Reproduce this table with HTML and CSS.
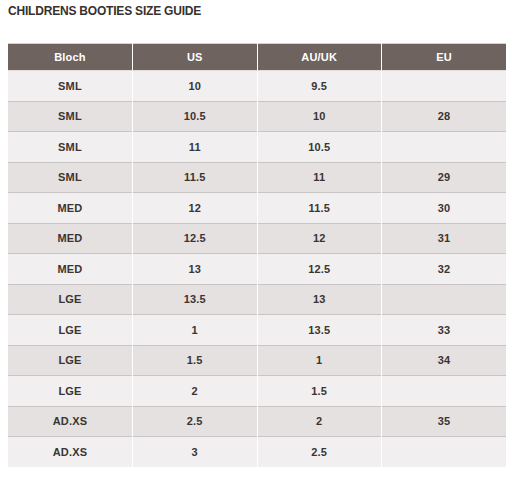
FILE: index.html
```html
<!DOCTYPE html>
<html>
<head>
<meta charset="utf-8">
<link rel="stylesheet" href="styles.css">
</head>
<body>
<h2 class="title">CHILDRENS BOOTIES SIZE GUIDE</h2>
<table class="size-table">
<thead>
<tr><th>Bloch</th><th>US</th><th>AU/UK</th><th>EU</th></tr>
</thead>
<tbody>
<tr><td>SML</td><td>10</td><td>9.5</td><td></td></tr>
<tr><td>SML</td><td>10.5</td><td>10</td><td>28</td></tr>
<tr><td>SML</td><td>11</td><td>10.5</td><td></td></tr>
<tr><td>SML</td><td>11.5</td><td>11</td><td>29</td></tr>
<tr><td>MED</td><td>12</td><td>11.5</td><td>30</td></tr>
<tr><td>MED</td><td>12.5</td><td>12</td><td>31</td></tr>
<tr><td>MED</td><td>13</td><td>12.5</td><td>32</td></tr>
<tr><td>LGE</td><td>13.5</td><td>13</td><td></td></tr>
<tr><td>LGE</td><td>1</td><td>13.5</td><td>33</td></tr>
<tr><td>LGE</td><td>1.5</td><td>1</td><td>34</td></tr>
<tr><td>LGE</td><td>2</td><td>1.5</td><td></td></tr>
<tr><td>AD.XS</td><td>2.5</td><td>2</td><td>35</td></tr>
<tr><td>AD.XS</td><td>3</td><td>2.5</td><td></td></tr>
</tbody>
</table>
</body>
</html>
```
FILE: styles.css
```css
body {
  margin: 0 8px;
  background: #fff;
  font-family: "Liberation Sans", Arial, sans-serif;
  color: #3a3533;
}
.title {
  margin: 0;
  font-size: 12px;
  font-weight: bold;
  line-height: 14px;
  padding-top: 4px;
  color: #36312f;
  letter-spacing: -0.2px;
}
.size-table {
  margin-top: 25px;
  width: 498px;
  border-collapse: collapse;
  table-layout: fixed;
  font-size: 11px;
  font-weight: bold;
  letter-spacing: 0.2px;
}
.size-table th,
.size-table td {
  text-align: center;
  padding: 0;
  border-right: 1px solid #fff;
  border-left: 1px solid #fff;
}
.size-table th:first-child,
.size-table td:first-child { border-left: none; }
.size-table th:last-child,
.size-table td:last-child { border-right: none; }
.size-table thead tr {
  height: 27px;
  background: #6e635e;
  color: #fff;
  border-top: 1px solid #d6d2d0;
}
.size-table thead th { border-bottom: 1px solid #e6dcd8; }
.size-table tbody tr {
  height: 30.5px;
  border-top: 1px solid #c9c5c4;
  color: #3a3533;
}
.size-table tbody tr:first-child { border-top: none; }
.size-table tbody tr:nth-child(odd) { background: #f1efef; }
.size-table tbody tr:nth-child(even) { background: #e5e1e0; }
```
